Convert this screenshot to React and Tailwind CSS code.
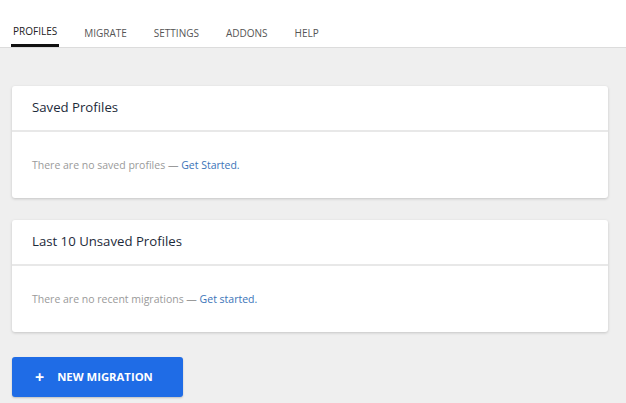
import React from "react";

const tabs = ["PROFILES", "MIGRATE", "SETTINGS", "ADDONS", "HELP"];

const Card = ({ title, text, link }) => (
    <div className="bg-white rounded-[3px] shadow-[0_1px_3px_rgba(0,0,0,0.18)]">
        <div className="h-[46px] flex items-center px-[20px] border-b-2 border-[#e8e8e8]">
            <h2 className="text-[13.2px] text-[#1d2a3a]">{title}</h2>
        </div>
        <div className="h-[66px] flex items-center px-[20px] pt-[2px]">
            <p className="text-[10.5px] text-[#9a9a9a]">
                {text} — <a className="text-[#3a73b8]" href="#">{link}</a>
            </p>
        </div>
    </div>
);

const App = () => {
    return (
        <div className="min-h-screen bg-[#efefef] font-['Open_Sans',sans-serif]">
            {/* Tabs */}
            <div className="h-[48px] bg-white border-b border-[#dcdcdc] flex items-end px-[13px] gap-[27px]">
                {tabs.map((t, i) => (
                    <div
                        key={t}
                        className={`h-full flex items-center pt-[19px] text-[10px] ${
                            i === 0 ? "text-[#222] border-b-[3px] border-[#111] -mx-[2px] px-[2px]" : "text-[#555]"
                        }`}
                    >
                        {t}
                    </div>
                ))}
            </div>

            <div className="px-[12px] pr-[18px] pt-[38px] flex flex-col gap-[22px]">
                <Card title="Saved Profiles" text="There are no saved profiles" link="Get Started." />
                <Card title="Last 10 Unsaved Profiles" text="There are no recent migrations" link="Get started." />
            </div>

            <div className="px-[12px] pt-[25px]">
                <button className="w-[171px] h-[40px] bg-[#1f6ce6] rounded-[3px] flex items-center pl-[23px] gap-[13px] text-white text-[11.3px] font-bold shadow-[0_1px_2px_rgba(0,0,0,0.2)]">
                    <span className="text-[16px] leading-none font-bold">+</span>
                    NEW MIGRATION
                </button>
            </div>
        </div>
    );
};

export default App;
